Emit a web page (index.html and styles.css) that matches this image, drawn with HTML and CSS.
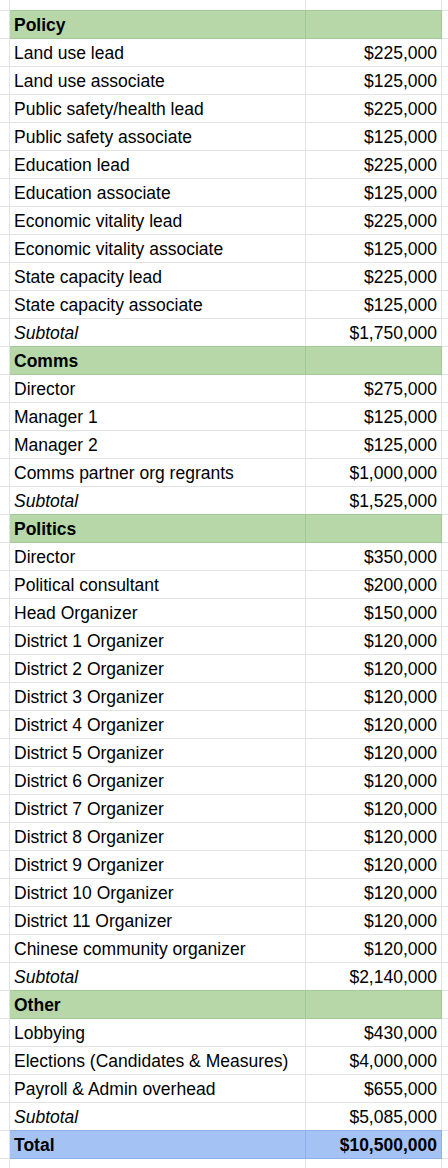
FILE: index.html
```html
<!DOCTYPE html>
<html>
<head>
<meta charset="utf-8">
<link rel="stylesheet" href="styles.css">
</head>
<body>
<div class="sheet">
  <div class="row top"><div class="c g"></div><div class="c a"></div><div class="c b"></div><div class="c e"></div></div>

  <div class="row head"><div class="c g"></div><div class="c a">Policy</div><div class="c b"></div><div class="c e"></div></div>
  <div class="row"><div class="c g"></div><div class="c a">Land use lead</div><div class="c b">$225,000</div><div class="c e"></div></div>
  <div class="row"><div class="c g"></div><div class="c a">Land use associate</div><div class="c b">$125,000</div><div class="c e"></div></div>
  <div class="row"><div class="c g"></div><div class="c a">Public safety/health lead</div><div class="c b">$225,000</div><div class="c e"></div></div>
  <div class="row"><div class="c g"></div><div class="c a">Public safety associate</div><div class="c b">$125,000</div><div class="c e"></div></div>
  <div class="row"><div class="c g"></div><div class="c a">Education lead</div><div class="c b">$225,000</div><div class="c e"></div></div>
  <div class="row"><div class="c g"></div><div class="c a">Education associate</div><div class="c b">$125,000</div><div class="c e"></div></div>
  <div class="row"><div class="c g"></div><div class="c a">Economic vitality lead</div><div class="c b">$225,000</div><div class="c e"></div></div>
  <div class="row"><div class="c g"></div><div class="c a">Economic vitality associate</div><div class="c b">$125,000</div><div class="c e"></div></div>
  <div class="row"><div class="c g"></div><div class="c a">State capacity lead</div><div class="c b">$225,000</div><div class="c e"></div></div>
  <div class="row"><div class="c g"></div><div class="c a">State capacity associate</div><div class="c b">$125,000</div><div class="c e"></div></div>
  <div class="row sub"><div class="c g"></div><div class="c a">Subtotal</div><div class="c b">$1,750,000</div><div class="c e"></div></div>

  <div class="row head"><div class="c g"></div><div class="c a">Comms</div><div class="c b"></div><div class="c e"></div></div>
  <div class="row"><div class="c g"></div><div class="c a">Director</div><div class="c b">$275,000</div><div class="c e"></div></div>
  <div class="row"><div class="c g"></div><div class="c a">Manager 1</div><div class="c b">$125,000</div><div class="c e"></div></div>
  <div class="row"><div class="c g"></div><div class="c a">Manager 2</div><div class="c b">$125,000</div><div class="c e"></div></div>
  <div class="row"><div class="c g"></div><div class="c a">Comms partner org regrants</div><div class="c b">$1,000,000</div><div class="c e"></div></div>
  <div class="row sub"><div class="c g"></div><div class="c a">Subtotal</div><div class="c b">$1,525,000</div><div class="c e"></div></div>

  <div class="row head"><div class="c g"></div><div class="c a">Politics</div><div class="c b"></div><div class="c e"></div></div>
  <div class="row"><div class="c g"></div><div class="c a">Director</div><div class="c b">$350,000</div><div class="c e"></div></div>
  <div class="row"><div class="c g"></div><div class="c a">Political consultant</div><div class="c b">$200,000</div><div class="c e"></div></div>
  <div class="row"><div class="c g"></div><div class="c a">Head Organizer</div><div class="c b">$150,000</div><div class="c e"></div></div>
  <div class="row"><div class="c g"></div><div class="c a">District 1 Organizer</div><div class="c b">$120,000</div><div class="c e"></div></div>
  <div class="row"><div class="c g"></div><div class="c a">District 2 Organizer</div><div class="c b">$120,000</div><div class="c e"></div></div>
  <div class="row"><div class="c g"></div><div class="c a">District 3 Organizer</div><div class="c b">$120,000</div><div class="c e"></div></div>
  <div class="row"><div class="c g"></div><div class="c a">District 4 Organizer</div><div class="c b">$120,000</div><div class="c e"></div></div>
  <div class="row"><div class="c g"></div><div class="c a">District 5 Organizer</div><div class="c b">$120,000</div><div class="c e"></div></div>
  <div class="row"><div class="c g"></div><div class="c a">District 6 Organizer</div><div class="c b">$120,000</div><div class="c e"></div></div>
  <div class="row"><div class="c g"></div><div class="c a">District 7 Organizer</div><div class="c b">$120,000</div><div class="c e"></div></div>
  <div class="row"><div class="c g"></div><div class="c a">District 8 Organizer</div><div class="c b">$120,000</div><div class="c e"></div></div>
  <div class="row"><div class="c g"></div><div class="c a">District 9 Organizer</div><div class="c b">$120,000</div><div class="c e"></div></div>
  <div class="row"><div class="c g"></div><div class="c a">District 10 Organizer</div><div class="c b">$120,000</div><div class="c e"></div></div>
  <div class="row"><div class="c g"></div><div class="c a">District 11 Organizer</div><div class="c b">$120,000</div><div class="c e"></div></div>
  <div class="row"><div class="c g"></div><div class="c a">Chinese community organizer</div><div class="c b">$120,000</div><div class="c e"></div></div>
  <div class="row sub"><div class="c g"></div><div class="c a">Subtotal</div><div class="c b">$2,140,000</div><div class="c e"></div></div>

  <div class="row head"><div class="c g"></div><div class="c a">Other</div><div class="c b"></div><div class="c e"></div></div>
  <div class="row"><div class="c g"></div><div class="c a">Lobbying</div><div class="c b">$430,000</div><div class="c e"></div></div>
  <div class="row"><div class="c g"></div><div class="c a">Elections (Candidates &amp; Measures)</div><div class="c b">$4,000,000</div><div class="c e"></div></div>
  <div class="row"><div class="c g"></div><div class="c a">Payroll &amp; Admin overhead</div><div class="c b">$655,000</div><div class="c e"></div></div>
  <div class="row sub"><div class="c g"></div><div class="c a">Subtotal</div><div class="c b">$5,085,000</div><div class="c e"></div></div>

  <div class="row total"><div class="c g"></div><div class="c a">Total</div><div class="c b">$10,500,000</div><div class="c e"></div></div>
  <div class="row"><div class="c g"></div><div class="c a"></div><div class="c b"></div><div class="c e"></div></div>
</div>
</body>
</html>
```
FILE: styles.css
```css
html, body {
  margin: 0;
  padding: 0;
  background: #ffffff;
}
body {
  width: 448px;
  height: 1168px;
  overflow: hidden;
  font-family: "Liberation Sans", Arial, sans-serif;
  font-size: 17.5px;
  color: #000000;
}
.sheet {
  display: flex;
  flex-direction: column;
}
.row {
  display: flex;
  height: 28px;
  flex: none;
}
.row.top {
  height: 11px;
}
.c {
  box-sizing: border-box;
  height: 100%;
  border-right: 1px solid #e2e3e3;
  border-bottom: 1px solid #e2e3e3;
  padding-top: 1px;
  line-height: 26px;
  white-space: nowrap;
  overflow: hidden;
}
.g {
  width: 10px;
  flex: none;
}
.a {
  width: 296px;
  flex: none;
  padding-left: 4px;
}
.b {
  width: 136px;
  flex: none;
  padding-right: 4px;
  text-align: right;
}
.e {
  flex: 1;
  border-right: none;
}
.head {
  margin-top: -1px;
  height: 29px;
}
.head .a, .head .b {
  background: #b7d7a8;
  border-color: #a3c994;
  border-top: 1px solid #a3c994;
  font-weight: bold;
}
.head .g, .head .e {
  border-top: 1px solid #e2e3e3;
}
.sub .a {
  font-style: italic;
}
.total {
  margin-top: -1px;
  height: 29px;
}
.total .a, .total .b {
  background: #a4c2f4;
  border-color: #8fb0e6;
  border-top: 1px solid #8fb0e6;
  font-weight: bold;
}
.total .g, .total .e {
  border-top: 1px solid #e2e3e3;
}
```
